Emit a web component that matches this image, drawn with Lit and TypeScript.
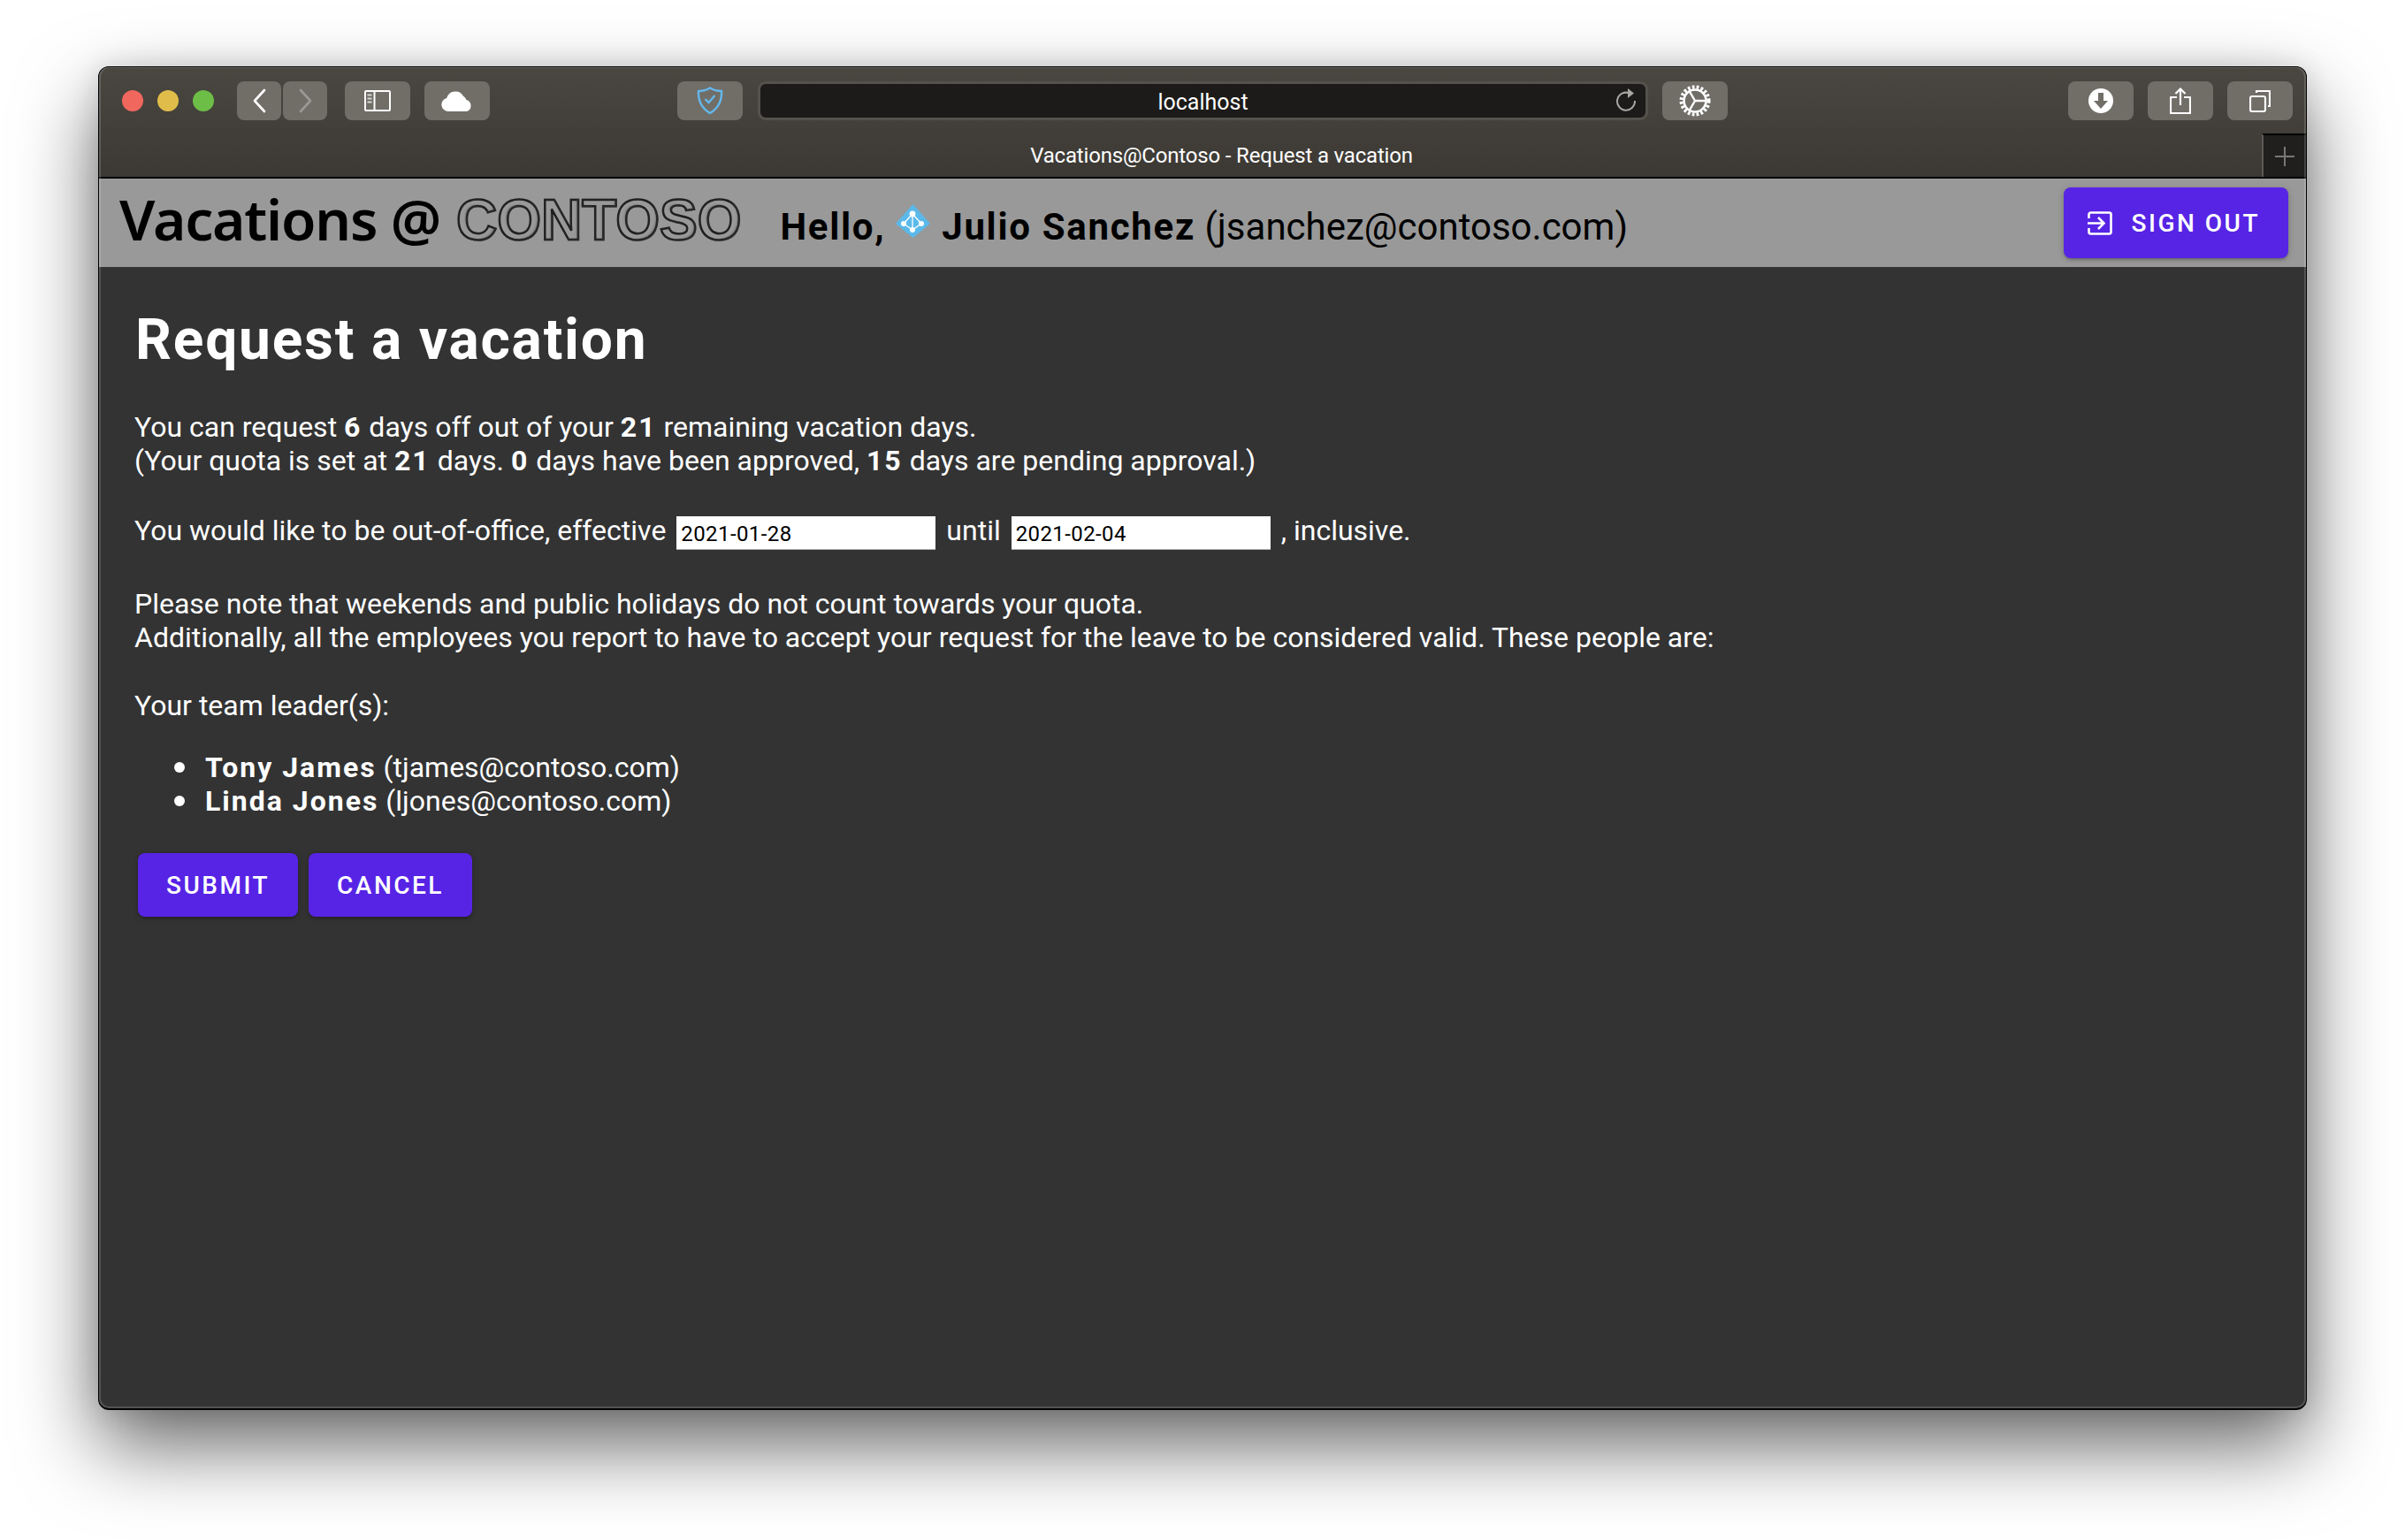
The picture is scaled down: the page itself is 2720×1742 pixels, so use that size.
import { html, css, LitElement, svg } from 'lit';
import { customElement } from 'lit/decorators.js';

const ICONS = {
    back: svg`<path d="M13 2 2 14l11 12" fill="none" stroke="#fff" stroke-width="2.6" stroke-linecap="round" stroke-linejoin="round"/>`,
    forward: svg`<path d="M2 2l11 12L2 26" fill="none" stroke="#9b9893" stroke-width="2.6" stroke-linecap="round" stroke-linejoin="round"/>`,
    sidebar: svg`<rect x="1" y="1" width="28" height="22" rx="1" fill="none" stroke="#fff" stroke-width="2"/><path d="M11.5 1v22" stroke="#fff" stroke-width="2"/><path d="M3.5 5.5h5M3.5 9.5h5M3.5 13.5h5" stroke="#d8d6d2" stroke-width="2"/>`,
    cloud: svg`<path d="M8 24a7.6 7.6 0 0 1-1.8-15A10.2 10.2 0 0 1 25 6.8a7 7 0 0 1 3.4 4.2A6.8 6.8 0 0 1 29 24z" fill="#fff"/>`,
    shield: svg`<path d="M15 1.5C11 4 6 5 2 5c-.6 11 3 19 13 25C25 24 28.6 16 28 5c-4 0-9-1-13-3.500z" fill="none" stroke="#63b8ec" stroke-width="2.4" stroke-linejoin="round"/><path d="M9.500 14l4 4 7-8" fill="none" stroke="#63b8ec" stroke-width="2.4"/>`,
    download: svg`<circle cx="14" cy="14" r="14" fill="#fff"/><path d="M11 5h6v9h5l-8 9-8-9h5z" fill="#716e68"/>`,
    share: svg`<path d="M8 11H1v18h22V11h-7" fill="none" stroke="#fff" stroke-width="2.2" stroke-linejoin="round"/><path d="M12 20V2M6.500 7 12 1.500 17.500 7" fill="none" stroke="#fff" stroke-width="2.2"/>`,
    tabs: svg`<rect x="1" y="7" width="17" height="17" rx="2" fill="none" stroke="#fff" stroke-width="2.2"/><path d="M8 3V1h15v17h-2" fill="none" stroke="#fff" stroke-width="2.2" stroke-linejoin="round"/>`,
    signout: svg`<path d="M1.500 8V3.500a2 2 0 0 1 2-2h21a2 2 0 0 1 2 2v20a2 2 0 0 1-2 2h-21a2 2 0 0 1-2-2V19" fill="none" stroke="#fff" stroke-width="2.6"/><path d="M0 13.500h18M12 7l6.500 6.500L12 20" fill="none" stroke="#fff" stroke-width="2.6"/>`,
    reload: svg`<path d="M17 5.500A10 10 0 1 0 23 14" fill="none" stroke="#a8a7a4" stroke-width="2"/><path d="M15 0l7 5.500-7 5.500z" fill="#a8a7a4"/>`,
    gear: svg`<circle cx="18" cy="18" r="15.500" fill="none" stroke="#fff" stroke-width="4" stroke-dasharray="2.800 2.150"/><circle cx="18" cy="18" r="12.500" fill="none" stroke="#fff" stroke-width="2.600"/><path d="M18 18h13M18 18l-6.500 11.200M18 18l-6.500-11.200" stroke="#fff" stroke-width="2.400"/>`,
    diamond: svg`<path d="M19.500 0 39 22 19.500 38 0 22z" fill="#5bb9ea"/><path d="M19 11 9 22l10 7 10-7zM19 11v18" fill="none" stroke="#fff" stroke-width="1.300"/><circle cx="19" cy="11" r="3.400" fill="#fff"/><circle cx="9" cy="22" r="3" fill="#fff"/><circle cx="29" cy="22" r="3" fill="#fff"/><circle cx="19" cy="29" r="3" fill="#fff"/>`,
};

@customElement('app-root')
export class AppRoot extends LitElement {

    static styles = css`
    :host {
        display: block;
        box-sizing: border-box;
        height: 1742px;
        padding: 75px 111px 147px;
        background: #fff;
        font-family: Roboto, "Liberation Sans", sans-serif;
    }

    .window {
        position: relative;
        display: flex;
        flex-direction: column;
        height: 100%;
        box-sizing: border-box;
        border: 1px solid #000;
        border-bottom-width: 2px;
        border-radius: 12px;
        overflow: hidden;
        background: #333;
    }

    .window-shadow {
        height: 100%;
        border-radius: 12px;
        box-shadow: 0 40px 90px rgba(0, 0, 0, 0.6), 0 0 30px rgba(0, 0, 0, 0.12);
    }

    .window::after {
        content: "";
        position: absolute;
        inset: 0;
        border: 2px solid rgba(255, 255, 255, 0.16);
        border-top-width: 1px;
        border-radius: 11px;
        pointer-events: none;
    }

    .chrome {
        flex: none;
        height: 126px;
        box-sizing: border-box;
        border-bottom: 2px solid #000;
        background: linear-gradient(#4a4741, #3c3934);
        display: flex;
        flex-direction: column;
    }

    .toolbar {
        display: flex;
        align-items: center;
        height: 44px;
        margin-top: 16px;
        padding: 0 15px 0 26px;
    }

    .lights {
        display: flex;
        gap: 16px;
        margin-right: 26px;
    }

    .light {
        width: 24px;
        height: 24px;
        border-radius: 50%;
    }

    .red { background: #f0675e; }
    .yellow { background: #e0bd4a; }
    .green { background: #6dbe47; }

    .tool {
        flex: none;
        display: flex;
        align-items: center;
        justify-content: center;
        width: 74px;
        height: 44px;
        border-radius: 8px;
        background: #716e68;
    }

    .nav { width: 50px; margin-right: 2px; }
    .gap16 { margin-left: 16px; }
    .gap18 { margin-left: 18px; }
    .shield { margin-left: 212px; }
    .download { margin-left: 385px; }

    .url {
        flex: none;
        position: relative;
        width: 1007px;
        height: 44px;
        box-sizing: border-box;
        margin-left: 17px;
        border: 3px solid #55524d;
        border-radius: 9px;
        background: #1c1b19;
        color: #fff;
        font-size: 25px;
        line-height: 42px;
        text-align: center;
    }

    .url svg {
        position: absolute;
        right: 11px;
        top: 5px;
    }

    .tabbar {
        flex: 1;
        display: flex;
        margin-top: 15px;
    }

    .page-title {
        flex: 1;
        padding: 3px 0 0 93px;
        color: #fff;
        font-size: 24px;
        line-height: 44px;
        letter-spacing: -0.18px;
        text-align: center;
    }

    .new-tab {
        width: 50px;
        box-sizing: border-box;
        border-top: 2px solid #000;
        border-left: 2px solid #5a5955;
        background: #201f1d;
        display: flex;
        align-items: center;
        justify-content: center;
    }

    header {
        flex: none;
        display: flex;
        align-items: center;
        height: 100px;
        padding: 0 20px 0 23px;
        background: #999;
        color: #000;
    }

    .brand {
        margin-top: -10px;
        font-family: "Noto Sans", sans-serif;
        font-weight: 600;
        font-size: 64px;
        letter-spacing: -1.2px;
    }

    .contoso {
        margin: -6px 0 0 18px;
        font-family: "Liberation Sans", sans-serif;
        font-weight: 700;
        font-size: 64px;
        color: #999;
        -webkit-text-stroke: 2.5px #222;
        filter: url(#bevel);
    }

    .defs {
        position: absolute;
        width: 0;
        height: 0;
    }

    .hello {
        display: flex;
        align-items: center;
        margin-left: 44px;
        font-size: 42px;
        padding-top: 8px;
    }

    .hello b {
        letter-spacing: 1.7px;
    }

    .hello svg {
        margin: -12px 13px 0 12px;
    }

    b {
        font-weight: 700;
        letter-spacing: 2px;
    }

    .btn {
        display: inline-flex;
        align-items: center;
        justify-content: center;
        gap: 22px;
        height: 72px;
        padding: 0 32px;
        border: none;
        border-radius: 8px;
        background: #5724e6;
        color: #fff;
        font-family: inherit;
        font-size: 28px;
        font-weight: 500;
        letter-spacing: 2.5px;
        box-shadow: 0 3px 3px -2px rgba(0, 0, 0, 0.2), 0 2px 4px rgba(0, 0, 0, 0.14), 0 1px 8px rgba(0, 0, 0, 0.12);
    }

    .sign-out {
        margin-left: auto;
        height: 80px;
        padding: 0 32px 0 27px;
    }

    main {
        flex: 1;
        padding: 0 0 0 40px;
        color: #fff;
        font-size: 32px;
        line-height: 38px;
    }

    h1 {
        margin: 45px 0 42px 1px;
        font-size: 64px;
        font-weight: 700;
        line-height: 75px;
        letter-spacing: 1.8px;
    }

    p {
        margin: 0;
    }

    .period {
        display: flex;
        align-items: center;
        margin: 38px 0 0;
        gap: 12px;
    }

    .period input {
        width: 293px;
        height: 38px;
        box-sizing: border-box;
        margin: 6px 0 0;
        padding: 2px 5px 0;
        border: none;
        border-bottom: 1px solid #b0b0b0;
        background: #fff;
        color: #000;
        font-family: inherit;
        font-size: 24px;
        letter-spacing: 0.4px;
    }

    .note { margin-top: 42px; }
    .leaders { margin-top: 39px; }

    ul {
        margin: 32px 0 0;
        padding: 0 0 0 45px;
        list-style: none;
    }

    li {
        display: flex;
        align-items: center;
        gap: 23px;
    }

    li::before {
        content: "";
        flex: none;
        width: 12px;
        height: 12px;
        border-radius: 50%;
        background: #fff;
    }

    .actions {
        display: flex;
        gap: 12px;
        margin: 40px 0 0 4px;
    }
  `;

    private icon(body: unknown, w: number, h: number) {
        return html`<svg width="${w}" height="${h}" viewBox="0 0 ${w} ${h}">${body}</svg>`;
    }

    render() {
        return html`
            <svg class="defs">
                <filter id="bevel" x="-5%" y="-10%" width="110%" height="120%">
                    <feOffset in="SourceAlpha" dx="-3" dy="-2" result="off"/>
                    <feGaussianBlur in="off" stdDeviation="0.8" result="blur"/>
                    <feComposite in="SourceAlpha" in2="blur" operator="out" result="inner"/>
                    <feFlood flood-color="#333" flood-opacity="0.55"/>
                    <feComposite in2="inner" operator="in" result="shade"/>
                    <feMerge>
                        <feMergeNode in="SourceGraphic"/>
                        <feMergeNode in="shade"/>
                    </feMerge>
                </filter>
            </svg>
            <div class="window-shadow">
            <div class="window">
                <div class="chrome">
                    <div class="toolbar">
                        <div class="lights">
                            <span class="light red"></span>
                            <span class="light yellow"></span>
                            <span class="light green"></span>
                        </div>
                        <div class="tool nav">${this.icon(ICONS.back, 15, 28)}</div>
                        <div class="tool nav">${this.icon(ICONS.forward, 15, 28)}</div>
                        <div class="tool gap18">${this.icon(ICONS.sidebar, 30, 24)}</div>
                        <div class="tool gap16">${this.icon(ICONS.cloud, 36, 24)}</div>
                        <div class="tool shield">${this.icon(ICONS.shield, 30, 32)}</div>
                        <div class="url">localhost${this.icon(ICONS.reload, 24, 27)}</div>
                        <div class="tool gap16">${this.icon(ICONS.gear, 36, 36)}</div>
                        <div class="tool download">${this.icon(ICONS.download, 28, 28)}</div>
                        <div class="tool gap16">${this.icon(ICONS.share, 24, 30)}</div>
                        <div class="tool gap16">${this.icon(ICONS.tabs, 24, 25)}</div>
                    </div>
                    <div class="tabbar">
                        <div class="page-title">Vacations@Contoso - Request a vacation</div>
                        <div class="new-tab">
                            <svg width="22" height="22" viewBox="0 0 22 22"><path d="M11 0v22M0 11h22" stroke="#777" stroke-width="2"/></svg>
                        </div>
                    </div>
                </div>
                <header>
                    <span class="brand">Vacations @</span>
                    <span class="contoso">CONTOSO</span>
                    <span class="hello">
                        <b>Hello,</b>
                        ${this.icon(ICONS.diamond, 39, 38)}
                        <b>Julio Sanchez</b>&nbsp;(jsanchez@contoso.com)
                    </span>
                    <button class="btn sign-out">${this.icon(ICONS.signout, 28, 27)}SIGN OUT</button>
                </header>
                <main>
                    <h1>Request a vacation</h1>
                    <p>You can request <b>6</b> days off out of your <b>21</b> remaining vacation days.<br>
                    (Your quota is set at <b>21</b> days. <b>0</b> days have been approved, <b>15</b> days are pending approval.)</p>
                    <div class="period">
                        <span>You would like to be out-of-office, effective</span>
                        <input type="text" .value=${'2021-01-28'}>
                        <span>until</span>
                        <input type="text" .value=${'2021-02-04'}>
                        <span>, inclusive.</span>
                    </div>
                    <p class="note">Please note that weekends and public holidays do not count towards your quota.<br>
                    Additionally, all the employees you report to have to accept your request for the leave to be considered valid. These people are:</p>
                    <p class="leaders">Your team leader(s):</p>
                    <ul>
                        <li><span><b>Tony James</b> (tjames@contoso.com)</span></li>
                        <li><span><b>Linda Jones</b> (ljones@contoso.com)</span></li>
                    </ul>
                    <div class="actions">
                        <button class="btn">SUBMIT</button>
                        <button class="btn">CANCEL</button>
                    </div>
                </main>
            </div>
            </div>
        `;
    }
}

declare global {
    interface HTMLElementTagNameMap {
        "app-root": AppRoot;
    }
}
